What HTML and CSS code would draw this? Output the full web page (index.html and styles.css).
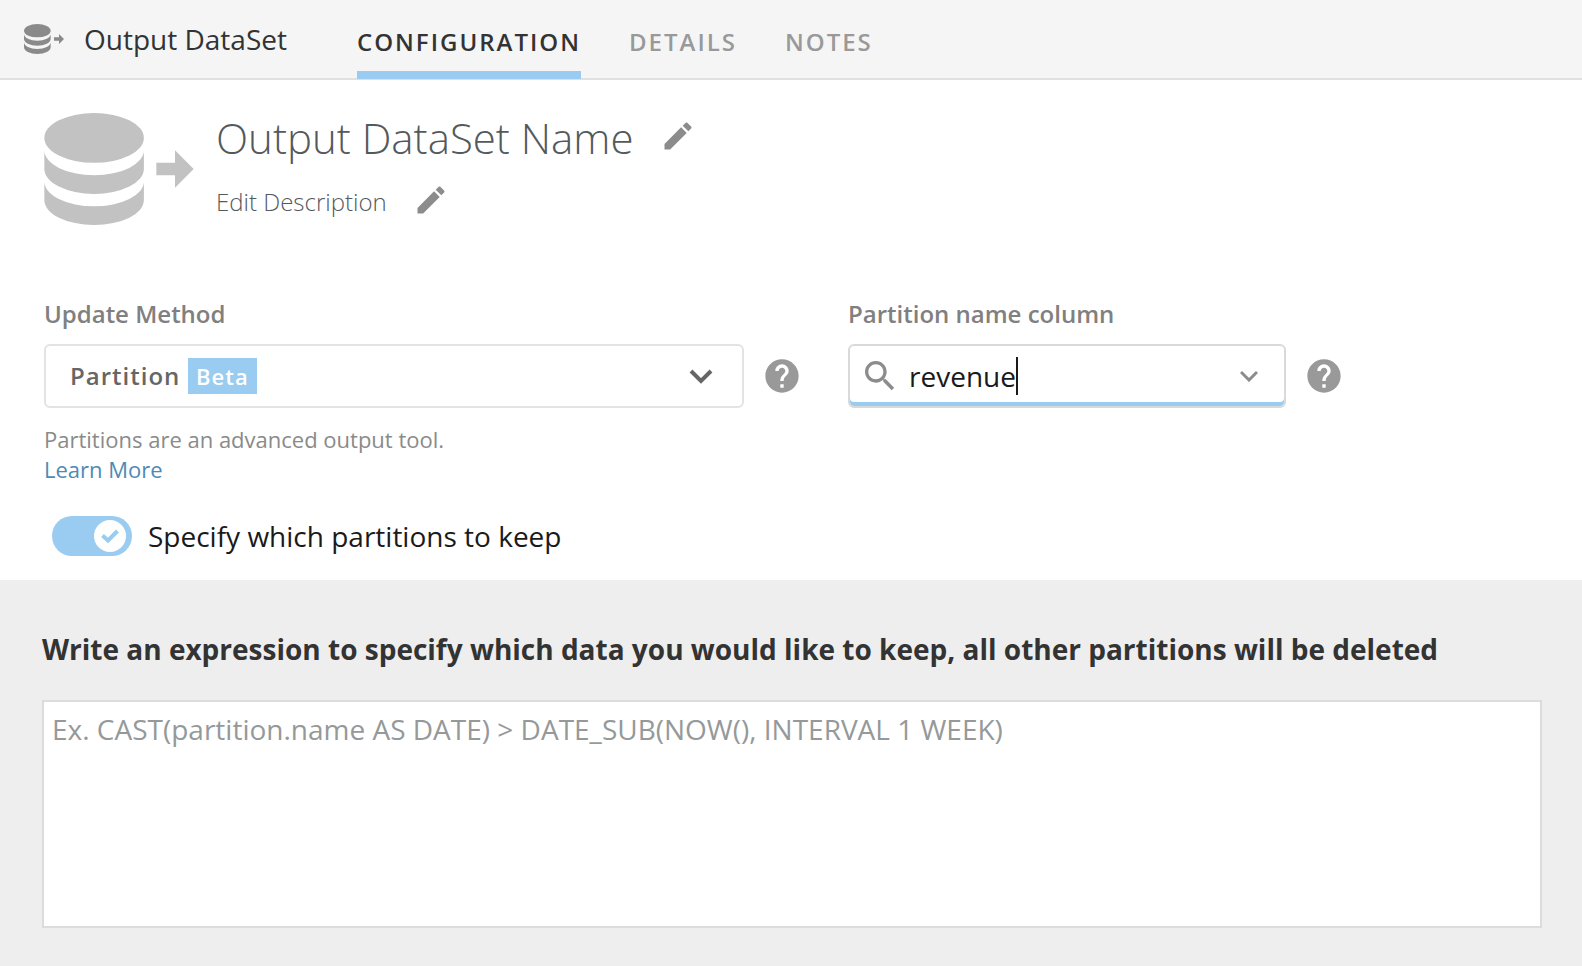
FILE: index.html
```html
<!DOCTYPE html>
<html lang="en">
	<head>
		<meta charset="UTF-8">
		<meta name="viewport" content="width=device-width, initial-scale=1">
		<title>Output DataSet</title>
		<link rel="stylesheet" href="styles.css">
	</head>
	<body>
		<!-- shared icons -->
		<svg class="sprite" width="0" height="0" aria-hidden="true">
			<symbol id="dataset" viewBox="0 0 24 18">
				<ellipse cx="8" cy="4" rx="8" ry="4"/>
				<path d="M0 6a8 4 0 0 0 16 0v3a8 4 0 0 1-16 0z"/>
				<path d="M0 11a8 4 0 0 0 16 0v3a8 4 0 0 1-16 0z"/>
				<path d="M18 8h3V6l3 3-3 3v-2h-3z"/>
			</symbol>
			<symbol id="pencil" viewBox="0 0 24 24">
				<path d="M3 17.25V21h3.75L17.81 9.94l-3.75-3.75L3 17.25zM20.71 7.04c.39-.39.39-1.02 0-1.41l-2.34-2.34c-.39-.39-1.02-.39-1.41 0l-1.83 1.83 3.75 3.75 1.83-1.83z"/>
			</symbol>
			<symbol id="help" viewBox="0 0 24 24">
				<path d="M12 2C6.48 2 2 6.48 2 12s4.48 10 10 10 10-4.48 10-10S17.52 2 12 2zm1 17h-2v-2h2v2zm2.07-7.75l-.9.92C13.45 12.9 13 13.5 13 15h-2v-.5c0-1.1.45-2.1 1.17-2.83l1.24-1.26c.37-.36.59-.86.59-1.41 0-1.1-.9-2-2-2s-2 .9-2 2H8c0-2.21 1.79-4 4-4s4 1.79 4 4c0 .88-.36 1.68-.93 2.25z"/>
			</symbol>
		</svg>

		<header class="topbar">
			<svg class="topbar-icon"><use href="#dataset"/></svg>
			<span class="topbar-title">Output DataSet</span>
			<nav class="tabs">
				<a class="tab current" href="#configuration">CONFIGURATION</a>
				<a class="tab" href="#details">DETAILS</a>
				<a class="tab" href="#notes">NOTES</a>
			</nav>
		</header>

		<main class="main" id="configuration">
			<section class="dataset">
				<svg class="dataset-icon"><use href="#dataset"/></svg>
				<div class="dataset-info">
					<div class="row">
						<h1 class="dataset-name">Output DataSet Name</h1>
						<button class="edit" type="button" aria-label="Edit name"><svg><use href="#pencil"/></svg></button>
					</div>
					<div class="row">
						<p class="dataset-desc">Edit Description</p>
						<button class="edit" type="button" aria-label="Edit description"><svg><use href="#pencil"/></svg></button>
					</div>
				</div>
			</section>

			<section class="fields">
				<div class="field">
					<label class="label" for="method">Update Method</label>
					<div class="control">
						<div class="select-box">
							<select class="select" id="method">
								<option>Partition</option>
							</select>
							<span class="beta">Beta</span>
							<svg class="select-arrow" viewBox="0 0 24 16"><path d="M2 3l10 10L22 3" fill="none" stroke="currentColor" stroke-width="4"/></svg>
						</div>
						<button class="help" type="button" aria-label="Update method help"><svg><use href="#help"/></svg></button>
					</div>
					<p class="hint">Partitions are an advanced output tool.<br><a class="link" href="#">Learn More</a></p>
				</div>
				<div class="field">
					<label class="label" for="column">Partition name column</label>
					<div class="control">
						<div class="search-box">
							<svg class="search-icon" viewBox="0 0 24 24"><path d="M15.5 14h-.79l-.28-.27C15.41 12.59 16 11.11 16 9.5 16 5.91 13.09 3 9.5 3S3 5.91 3 9.5 5.91 16 9.5 16c1.61 0 3.09-.59 4.23-1.57l.27.28v.79l5 4.99L20.49 19l-4.99-5zm-6 0C7.01 14 5 11.99 5 9.5S7.01 5 9.5 5 14 7.01 14 9.5 11.99 14 9.5 14z"/></svg>
							<input class="search" id="column" type="text" value="revenue">
							<span class="caret"></span>
							<button class="open" type="button" aria-label="Show columns"><svg viewBox="0 0 18 12"><path d="M1 2l8 8 8-8" fill="none" stroke="currentColor" stroke-width="3"/></svg></button>
						</div>
						<button class="help" type="button" aria-label="Partition name column help"><svg><use href="#help"/></svg></button>
					</div>
				</div>
			</section>

			<label class="toggle">
				<input class="toggle-input" type="checkbox" checked>
				<span class="switch">
					<span class="knob"><svg viewBox="0 0 18 14"><path d="M1.500 6.500l5.500 5L16.500 2" fill="none" stroke="currentColor" stroke-width="4"/></svg></span>
				</span>
				Specify which partitions to keep
			</label>
		</main>

		<section class="expression">
			<label class="expression-title" for="expression">Write an expression to specify which data you would like to keep, all other partitions will be deleted</label>
			<textarea class="expression-text" id="expression" placeholder="Ex. CAST(partition.name AS DATE) &gt; DATE_SUB(NOW(), INTERVAL 1 WEEK)"></textarea>
		</section>
	</body>
</html>
```

FILE: styles.css
```css
* {
	box-sizing: border-box;
}
body {
	display: flex;
	flex-direction: column;
	min-height: 100vh;
	margin: 0;
	background-color: #fff;
	color: #1a1a1a;
	font-family: "Open Sans", "Noto Sans", sans-serif;
	font-size: 28px;
}
h1, p {
	margin: 0;
}
button {
	padding: 0;
	border: 0;
	background: none;
	cursor: pointer;
}
svg {
	display: block;
	fill: currentColor;
}
.sprite {
	position: absolute;
}

/* top bar */
.topbar {
	display: flex;
	align-items: center;
	height: 80px;
	padding-left: 24px;
	background-color: #f5f5f5;
	border-bottom: 2px solid #e0e0e0;
}
.topbar-icon {
	width: 40px;
	height: 30px;
	color: #8a8a8a;
}
.topbar-title {
	margin: 0 70px 0 20px;
	color: #333;
}
.tabs {
	display: flex;
	align-self: flex-start;
	gap: 48px;
}
.tab {
	height: 79px;
	padding-top: 13px;
	border-bottom: 8px solid transparent;
	color: #999;
	font-size: 24px;
	font-weight: 600;
	line-height: 58px;
	letter-spacing: 2px;
	text-decoration: none;
}
.tab.current {
	color: #333;
	border-color: #99ccf0;
}

/* name and description */
.main {
	padding: 30px 40px 24px 44px;
}
.dataset {
	display: flex;
	gap: 22px;
}
.dataset-icon {
	width: 150px;
	height: 112px;
	margin-top: 3px;
	color: #c2c2c2;
}
.row {
	display: flex;
	align-items: center;
	gap: 26px;
	margin-bottom: 16px;
}
.dataset-name {
	color: #54595c;
	font-size: 42px;
	font-weight: 300;
	line-height: 56px;
}
.dataset-desc {
	color: #54595c;
	font-size: 24px;
	font-weight: 300;
	line-height: 40px;
}
.edit {
	height: 40px;
	color: #8c8c8c;
}
.edit svg {
	width: 36px;
	height: 36px;
	margin-bottom: 4px;
}

/* fields */
.fields {
	display: grid;
	grid-template-columns: minmax(0, 804px) minmax(0, 1fr);
	margin-top: 60px;
}
.label {
	display: block;
	margin-bottom: 14px;
	color: #808080;
	font-size: 24px;
	font-weight: 600;
	line-height: 32px;
}
.control {
	display: flex;
	align-items: center;
	gap: 18px;
}
.select-box {
	position: relative;
	flex: 0 1 700px;
}
.select {
	display: block;
	width: 100%;
	height: 64px;
	padding: 0 24px 2px;
	border: 2px solid #e3e3e3;
	border-radius: 6px;
	background-color: #fff;
	color: #666;
	font: inherit;
	font-size: 24px;
	font-weight: 600;
	letter-spacing: 1px;
	appearance: none;
}
/* badge and arrow lie over the select */
.beta {
	position: absolute;
	top: 14px;
	left: 144px;
	padding: 0 8px;
	background-color: #99ccf0;
	color: #fff;
	font-size: 22px;
	font-weight: 600;
	line-height: 36px;
	letter-spacing: 1px;
	pointer-events: none;
}
.select-arrow {
	position: absolute;
	top: 24px;
	right: 31px;
	width: 24px;
	height: 16px;
	color: #666;
	pointer-events: none;
}
.help {
	color: #999;
}
.help svg {
	width: 40px;
	height: 40px;
}
.hint {
	margin-top: 16px;
	color: #8a8a8a;
	font-size: 22px;
	line-height: 30px;
}
.link {
	color: #4d8ab5;
	text-decoration: none;
}
.search-box {
	display: flex;
	align-items: center;
	flex: 0 1 438px;
	height: 64px;
	padding: 0 26px 0 10px;
	border: 2px solid #d9d9d9;
	border-radius: 6px;
	box-shadow: inset 0 -4px #99ccf0;
}
.search-icon {
	width: 40px;
	height: 40px;
	margin-right: 9px;
	color: #8c8c8c;
}
.search {
	min-width: 0;
	padding: 0;
	border: 0;
	outline: 0;
	background: none;
	color: #1a1a1a;
	font: inherit;
	caret-color: transparent;
	field-sizing: content;
}
.caret {
	width: 2px;
	height: 38px;
	background-color: #1a1a1a;
}
.open {
	margin-left: auto;
	color: #8c8c8c;
}
.open svg {
	width: 18px;
	height: 12px;
}

/* switch */
.toggle {
	display: flex;
	align-items: center;
	gap: 16px;
	width: fit-content;
	margin: 32px 0 0 8px;
	line-height: 40px;
}
.toggle-input {
	position: absolute;
	opacity: 0;
}
.switch {
	display: flex;
	justify-content: flex-start;
	width: 80px;
	padding: 4px 6px;
	border-radius: 20px;
	background-color: #ccc;
	color: #ccc;
}
.toggle-input:checked + .switch {
	justify-content: flex-end;
	background-color: #99ccf0;
	color: #99ccf0;
}
.knob {
	display: grid;
	place-items: center;
	width: 32px;
	height: 32px;
	border-radius: 50%;
	background-color: #fff;
}
.knob svg {
	width: 18px;
	height: 14px;
}

/* expression */
.expression {
	display: flex;
	flex-direction: column;
	flex: 1;
	gap: 31px;
	padding: 49px 40px 38px 42px;
	background-color: #eee;
}
.expression-title {
	color: #333;
	font-weight: 700;
	line-height: 40px;
}
.expression-text {
	display: block;
	width: 100%;
	height: 228px;
	padding: 8px;
	border: 2px solid #dcdcdc;
	background-color: #fff;
	color: #1a1a1a;
	font: inherit;
	line-height: 38px;
	resize: none;
}
.expression-text::placeholder {
	color: #959999;
}
```
